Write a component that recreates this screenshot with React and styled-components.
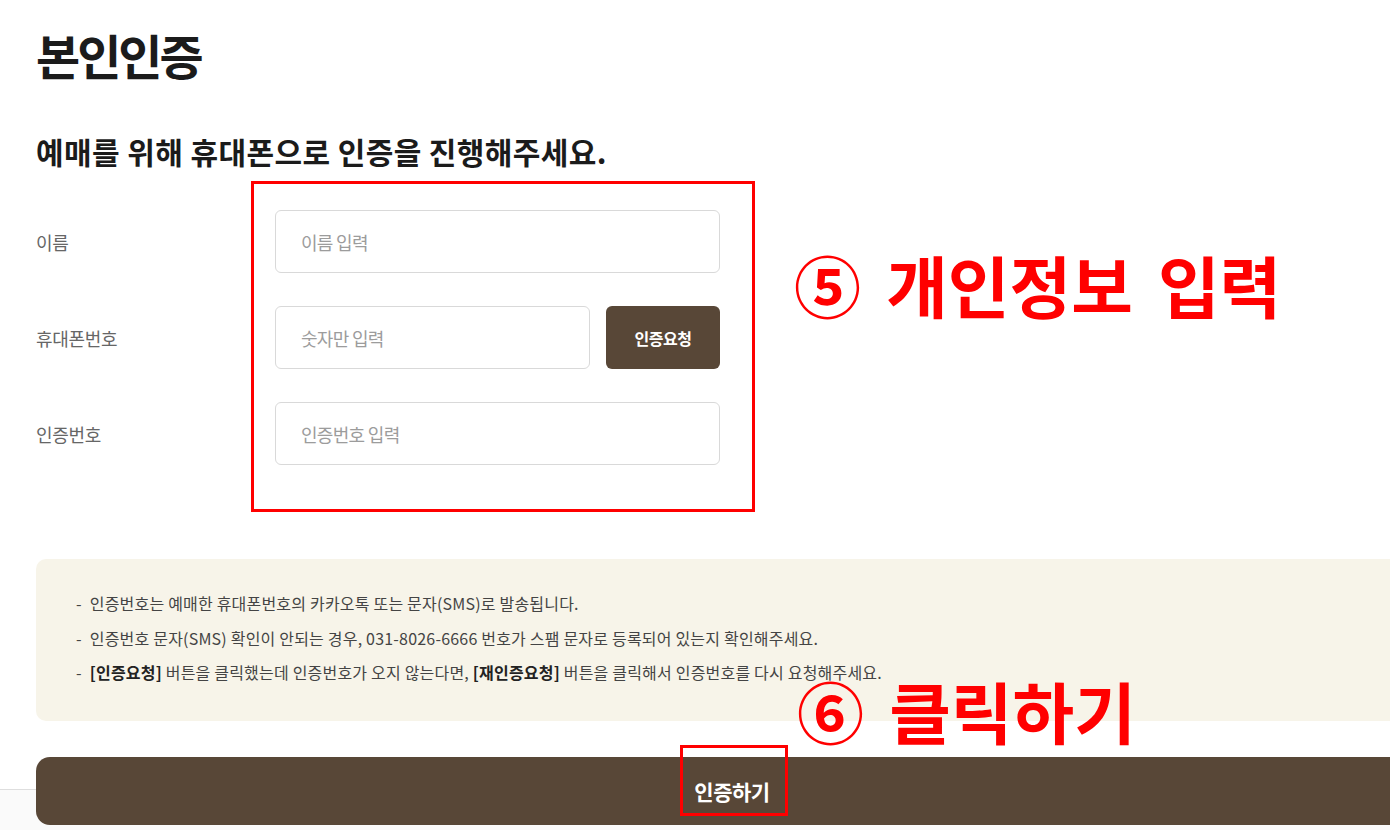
import React from "react";
import styled, { createGlobalStyle } from "styled-components";

const GlobalStyle = createGlobalStyle`
  html, body {
    margin: 0;
    padding: 0;
    overflow: hidden;
    background: #fff;
  }
  body {
    font-family: "Noto Sans CJK KR", "Noto Sans", sans-serif;
    color: #222;
  }
  * {
    box-sizing: border-box;
  }
`;

const Page = styled.div`
  position: relative;
  width: 1390px;
  height: 830px;
  overflow: hidden;
`;

const Content = styled.main`
  width: 1392px;
  margin-left: 36px;
  padding-top: 26px;
  display: flex;
  flex-direction: column;
`;

const Title = styled.h1`
  margin: 0;
  font-size: 48px;
  line-height: 56px;
  font-weight: 700;
  letter-spacing: -3px;
  color: #1b1b1b;
`;

const Subtitle = styled.h2`
  margin: 51px 0 0;
  font-size: 30px;
  line-height: 36px;
  font-weight: 700;
  letter-spacing: 0.4px;
  color: #1b1b1b;
`;

const Form = styled.div`
  margin-top: 41px;
  display: flex;
  flex-direction: column;
  gap: 33px;
`;

const Row = styled.div`
  display: grid;
  grid-template-columns: 239px 445px;
  align-items: center;
`;

const Label = styled.label`
  font-size: 18px;
  letter-spacing: -0.3px;
  color: #666;
`;

const Field = styled.div`
  display: flex;
  gap: 16px;
`;

const Input = styled.input`
  flex: 1;
  min-width: 0;
  height: 63px;
  padding: 0 25px;
  border: 1px solid #d9d9d9;
  border-radius: 6px;
  background: #fff;
  font-family: inherit;
  font-size: 18px;
  letter-spacing: -0.7px;
  color: #222;
  outline: none;

  &::placeholder {
    color: #9c9c9c;
  }
`;

const RequestButton = styled.button`
  width: 114px;
  height: 63px;
  border: 0;
  border-radius: 6px;
  background: #584737;
  color: #fff;
  font-family: inherit;
  font-size: 16px;
  font-weight: 700;
  letter-spacing: -0.5px;
  cursor: pointer;
`;

const Notice = styled.ul`
  list-style: none;
  margin: 94px 0 0;
  padding: 27px 0 31px 40px;
  background: #f7f4e9;
  border-radius: 10px;
`;

const NoticeItem = styled.li`
  font-size: 16px;
  line-height: 34.5px;
  letter-spacing: 0.2px;
  color: #444;

  &::before {
    content: "-";
    margin-right: 8px;
  }

  & > strong {
    font-weight: 700;
    color: #222;
  }
`;

const SubmitButton = styled.button`
  position: relative;
  z-index: 1;
  margin: 36px 0 -36px;
  height: 68px;
  border: 0;
  border-radius: 14px;
  background: #584737;
  color: #fff;
  font-family: inherit;
  font-size: 21px;
  font-weight: 700;
  letter-spacing: -0.5px;
  cursor: pointer;
`;

const Footer = styled.footer`
  height: 120px;
  border-top: 1px solid #dedede;
  background: #fafafa;
`;

const Frame = styled.div`
  position: absolute;
  left: ${(p) => p.x}px;
  top: ${(p) => p.y}px;
  width: ${(p) => p.w}px;
  height: ${(p) => p.h}px;
  border: 3px solid #ff0000;
  pointer-events: none;
  z-index: 2;
`;

const Callout = styled.div`
  position: absolute;
  left: ${(p) => p.x}px;
  top: ${(p) => p.y}px;
  font-size: 67px;
  line-height: 1;
  font-weight: 700;
  word-spacing: 10px;
  white-space: nowrap;
  color: #ff0000;
  z-index: 2;
`;

const fields = [
  { id: "name", label: "이름", placeholder: "이름 입력" },
  { id: "phone", label: "휴대폰번호", placeholder: "숫자만 입력", action: "인증요청" },
  { id: "code", label: "인증번호", placeholder: "인증번호 입력" },
];

const App = () => {
  return (
    <Page>
      <GlobalStyle />
      <Content>
        <Title>본인인증</Title>
        <Subtitle>예매를 위해 휴대폰으로 인증을 진행해주세요.</Subtitle>
        <Form>
          {fields.map((f) => (
            <Row key={f.id}>
              <Label htmlFor={f.id}>{f.label}</Label>
              <Field>
                <Input id={f.id} placeholder={f.placeholder} />
                {f.action && <RequestButton>{f.action}</RequestButton>}
              </Field>
            </Row>
          ))}
        </Form>
        <Notice>
          <NoticeItem>
            인증번호는 예매한 휴대폰번호의 카카오톡 또는 문자(SMS)로 발송됩니다.
          </NoticeItem>
          <NoticeItem>
            인증번호 문자(SMS) 확인이 안되는 경우, 031-8026-6666 번호가 스팸 문자로
            등록되어 있는지 확인해주세요.
          </NoticeItem>
          <NoticeItem>
            <strong>[인증요청]</strong> 버튼을 클릭했는데 인증번호가 오지 않는다면,{" "}
            <strong>[재인증요청]</strong> 버튼을 클릭해서 인증번호를 다시 요청해주세요.
          </NoticeItem>
        </Notice>
        <SubmitButton>인증하기</SubmitButton>
      </Content>
      <Footer />

      <Frame x={251} y={181} w={504} h={331} />
      <Callout x={794} y={250}>⑤ 개인정보 입력</Callout>
      <Callout x={797} y={676}>⑥ 클릭하기</Callout>
      <Frame x={680} y={745} w={108} h={71} />
    </Page>
  );
};

export default App;
